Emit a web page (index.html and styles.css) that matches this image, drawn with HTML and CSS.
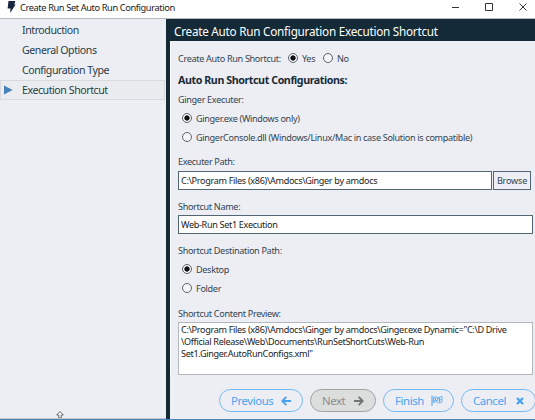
FILE: index.html
```html
<!DOCTYPE html>
<html lang="en">
<head>
<meta charset="utf-8">
<title>Create Run Set Auto Run Configuration</title>
<link rel="stylesheet" href="styles.css">
</head>
<body>
<div class="window">
  <header class="titlebar">
    <svg class="logo" width="10" height="13" viewBox="0 0 10 13"><path d="M1.5 0h6.8L7.3 3.6H8.6L3.2 12 3.5 7.4H.6z" fill="#17253d"/></svg>
    <span class="title">Create Run Set Auto Run Configuration</span>
    <svg class="controls" width="80" height="14" viewBox="0 0 80 14" fill="none" stroke="#333"><path d="M2 7.5h7"/><path d="M35.5 3.5h7v7h-7z"/><path d="M69.5 3.5l7 7m0-7l-7 7"/></svg>
  </header>
  <div class="body">
    <nav class="steps">
      <div class="step"><span>Introduction</span></div>
      <div class="step"><span>General Options</span></div>
      <div class="step"><span>Configuration Type</span></div>
      <div class="step current"><svg class="marker" width="9" height="10" viewBox="0 0 9 10"><path d="M0 .5L8.7 5 0 9.5z" fill="#4682b9"/></svg><span>Execution Shortcut</span></div>
      <svg class="cursor" width="8" height="7" viewBox="0 0 8 7"><path d="M4 .6L7.3 4H5.2v3H2.8V4H.7z" fill="#fff" stroke="#555" stroke-width=".9"/></svg>
    </nav>
    <main class="page">
      <h1><span>Create Auto Run Configuration Execution Shortcut</span></h1>
      <div class="form">
        <div class="line create"><span class="q">Create Auto Run Shortcut:</span><i class="radio on"></i><span class="yes">Yes</span><i class="radio"></i><span>No</span></div>
        <h2><span>Auto Run Shortcut Configurations:</span></h2>
        <div class="line label l1"><span>Ginger Executer:</span></div>
        <div class="line option"><i class="radio on"></i><span>Ginger.exe (Windows only)</span></div>
        <div class="line option"><i class="radio"></i><span>GingerConsole.dll (Windows/Linux/Mac in case Solution is compatible)</span></div>
        <div class="line label l2"><span>Executer Path:</span></div>
        <div class="path"><div class="input"><span>C:\Program Files (x86)\Amdocs\Ginger by amdocs</span></div><div class="browse"><span>Browse</span></div></div>
        <div class="line label l2"><span>Shortcut Name:</span></div>
        <div class="input name"><span>Web-Run Set1 Execution</span></div>
        <div class="line label l2"><span>Shortcut Destination Path:</span></div>
        <div class="line option"><i class="radio on"></i><span>Desktop</span></div>
        <div class="line option"><i class="radio"></i><span>Folder</span></div>
        <div class="line label l3"><span>Shortcut Content Preview:</span></div>
        <div class="preview"><span>C:\Program Files (x86)\Amdocs\Ginger by amdocs\Ginger.exe Dynamic="C:\D Drive</span><br><span>\Official Release\Web\Documents\RunSetShortCuts\Web-Run</span><br><span>Set1.Ginger.AutoRunConfigs.xml"</span></div>
      </div>
      <footer class="buttons">
        <div class="btn prev"><span>Previous</span><svg width="10" height="10" viewBox="0 0 10 10" fill="none" stroke="currentColor" stroke-width="1.9"><path d="M5.3 .9L1.3 5l4 4.1M1.5 5H10"/></svg></div>
        <div class="btn next"><span>Next</span><svg width="10" height="10" viewBox="0 0 10 10" fill="none" stroke="currentColor" stroke-width="1.9"><path d="M4.7 .9L8.7 5l-4 4.1M8.5 5H0"/></svg></div>
        <div class="btn finish"><span>Finish</span><svg width="12" height="11" viewBox="0 0 12 11" fill="none" stroke="currentColor"><path d="M1 .5V11" /><path d="M2.3 2.2c2-1.5 4 .9 6 .2L11 1.3v5.8c-2 1-3 1-4.5.3-1.6-.7-2.6-.5-4.2.3z" stroke-width=".8"/><path d="M2.5 3.8l2-.7v2.2l2 .5V3.3l2-.3v2.2l2-.7M4.5 5.3l-2 1M8.5 5.2v2" stroke-width=".9"/></svg></div>
        <div class="btn cancel"><span>Cancel</span><svg width="8" height="8" viewBox="0 0 8 8" fill="none" stroke="currentColor" stroke-width="2.4"><path d="M1 1l6 6M7 1L1 7"/></svg></div>
      </footer>
    </main>
  </div>
</div>
</body>
</html>
```

FILE: styles.css
```css
* { box-sizing: border-box; }
body { margin: 0; overflow: hidden; font-family: "Noto Sans", "Open Sans", sans-serif; font-size: 9.1px; letter-spacing: -.33px; color: #334450; }
.window { width: 535px; height: 420px; display: flex; flex-direction: column; background: #edeef4; border-bottom: 1px solid #4287bd; overflow: hidden; }
span { white-space: pre; }
svg { flex: none; display: block; }

.titlebar { height: 19px; flex: none; display: flex; align-items: center; background: #fff; border-bottom: 1px solid #b9bcbf; padding: 0 5px 4px 7px; color: #222; }
.title { margin-left: 3px; font-size: 9.3px; letter-spacing: -.41px; }
.logo { margin-top: 1px; }
.controls { margin-left: auto; }

.body { flex: 1; display: flex; min-height: 0; }
.steps { width: 166px; flex: none; display: flex; flex-direction: column; padding-top: 1px; border-bottom: 1px solid #c5c7ca; font-size: 10.6px; letter-spacing: -.44px; color: #263d48; }
.step { height: 20px; padding-left: 21px; display: flex; align-items: center; border: 1px solid transparent; width: 165px; }
.step.current { padding-left: 3px; background: #ebecef; border-color: #d8dadd; }
.marker { margin-right: 9px; }
.cursor { margin: auto 0 0 56px; }

.page { flex: 1; min-width: 0; display: flex; flex-direction: column; border-left: 4px solid #142a37; }
h1 { margin: 0; height: 22px; flex: none; padding: 2px 0 0 4px; display: flex; align-items: center; background: #142a37; color: #fff; font-size: 11.7px; font-weight: 400; letter-spacing: -.23px; line-height: 16px; }
.form { padding: 9px 2px 0 7px; border-left: 1px solid #f8f9fb; }
.line { height: 16px; display: flex; align-items: center; }
.option { padding-left: 4px; margin-top: 3px; }
.radio { width: 10px; height: 10px; flex: none; margin-right: 4px; border: 1px solid #59656c; border-radius: 50%; background: #f5f6f9; }
.radio.on { background: radial-gradient(circle, #111 0 2.3px, #f5f6f9 3px); }
.q { width: 110px; }
.yes { width: 21px; }
h2 { margin: 6px 0 0; height: 16px; display: flex; align-items: center; font-size: 10.7px; font-weight: 700; letter-spacing: -.43px; color: #182b37; }
.l1 { margin-top: 3px; }
.l2 { margin-top: 8px; }
.l3 { margin-top: 9px; }
.path { display: flex; gap: 1px; margin-top: 2px; }
.input { width: 314px; height: 19px; border: 1px solid #526773; background: #fff; padding-left: 2px; display: flex; align-items: center; color: #222; }
.input.name { width: 355px; margin-top: 1px; }
.browse { width: 38px; height: 19px; border: 1px solid #526773; background: #eeeff5; display: flex; align-items: center; justify-content: center; letter-spacing: -.2px; }
.preview { width: 355px; height: 53px; margin-top: 1px; border: 1px solid #b2b9be; background: #fff; padding: 1px 2px; line-height: 12px; color: #222; }

.buttons { display: flex; gap: 7px; margin: 14px 0 0 49px; font-size: 11.4px; letter-spacing: -.42px; }
.btn { height: 23px; flex: none; border: 1px solid #72b9f4; border-radius: 12px; display: flex; align-items: center; justify-content: space-between; color: #4aa3ef; padding: 0 11px; }
.prev { width: 84px; }
.next { width: 66px; background: #dcdddd; border-color: #a0a2a3; color: #8b8e90; }
.next svg { color: #6f7476; }
.finish { width: 71px; padding-right: 10px; }
.cancel { width: 75px; }
```
